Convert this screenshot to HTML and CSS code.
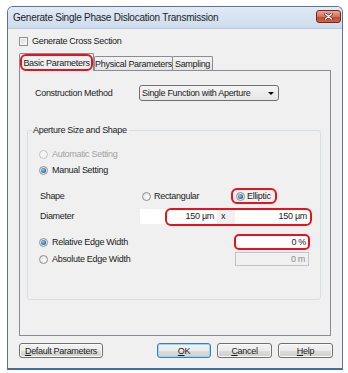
FILE: index.html
```html
<!DOCTYPE html>
<html lang="en">
<head>
  <meta charset="UTF-8" />
  <title>Generate Single Phase Dislocation Transmission</title>
  <link rel="stylesheet" href="styles.css">
</head>
<body>

  <div class="window">
    <div class="titlebar">
      <span class="title">Generate Single Phase Dislocation Transmission</span>
      <button class="close">
        <svg width="9" height="7" viewBox="0 0 9 7">
          <path d="M1.5 1 L7.5 6 M7.5 1 L1.5 6" stroke="#5a1c12" stroke-width="2.6" stroke-linecap="round"/>
          <path d="M1.5 1 L7.5 6 M7.5 1 L1.5 6" stroke="#fff" stroke-width="1.5" stroke-linecap="round"/>
        </svg>
      </button>
    </div>

    <div class="client">
      <label class="check-row">
        <span class="checkbox"></span>
        Generate Cross Section
      </label>

      <div class="tabs">
        <div class="tab active mark">Basic Parameters</div>
        <div class="tab physical">Physical Parameters</div>
        <div class="tab sampling">Sampling</div>
      </div>

      <div class="pane">
        <div class="method-row">
          <span class="method-label">Construction Method</span>
          <div class="combo">
            <span>Single Function with Aperture</span>
            <span class="arrow"></span>
          </div>
        </div>

        <fieldset class="group">
          <legend>Aperture Size and Shape</legend>
          <div class="group-body">
            <div class="row first disabled">
              <span class="radio"></span>Automatic Setting
            </div>
            <div class="row">
              <span class="radio on"></span>Manual Setting
            </div>

            <div class="row shape-row">
              <span class="field-label">Shape</span>
              <span class="option rect"><span class="radio"></span>Rectangular</span>
              <span class="option ellip mark"><span class="radio on"></span>Elliptic</span>
            </div>

            <div class="row diameter-row">
              <span class="field-label diam-label">Diameter</span>
              <div class="diameter">
                <span class="input wide">150 µm</span>
                <span class="times">x</span>
                <span class="input wide2">150 µm</span>
                <span class="diam-mark"></span>
              </div>
            </div>

            <div class="row edge-row">
              <span class="edge-label"><span class="radio on"></span>Relative Edge Width</span>
              <span class="input edge mark">0 %</span>
            </div>
            <div class="row edge-row tight">
              <span class="edge-label"><span class="radio"></span>Absolute Edge Width</span>
              <span class="input edge off">0 m</span>
            </div>
          </div>
        </fieldset>
      </div>

      <div class="buttons">
        <button class="btn default-params"><u>D</u>efault Parameters</button>
        <button class="btn ok"><u>O</u>K</button>
        <button class="btn"><u>C</u>ancel</button>
        <button class="btn"><u>H</u>elp</button>
      </div>
    </div>
  </div>

</body>
</html>
```

FILE: styles.css
```css
* {
  margin: 0;
  padding: 0;
  box-sizing: border-box;
}

body {
  background: #fff;
  font-family: "Liberation Sans", Arial, sans-serif;
  font-size: 9px;
  letter-spacing: -0.3px;
  color: #1b1b1b;
}

button {
  font: inherit;
  letter-spacing: inherit;
  color: inherit;
}

.window {
  margin: 6px 0 0 7px;
  width: 336px;
  height: 364px;
  border: 1px solid #5b7394;
  border-bottom: 2px solid #3f6ea3;
  border-radius: 6px 6px 0 0;
  background: #f0f0f0;
  display: flex;
  flex-direction: column;
  overflow: hidden;
}

/* title bar */

.titlebar {
  height: 22px;
  flex: none;
  display: flex;
  justify-content: space-between;
  align-items: center;
  padding: 0 1px 0 5px;
  background: linear-gradient(#e1eaf5, #cddced);
  border-bottom: 1px solid #b9c9dc;
}

.title {
  font-size: 10px;
  letter-spacing: -0.25px;
  color: #1e1e1e;
}

.close {
  align-self: flex-start;
  margin-top: 3px;
  width: 25px;
  height: 13px;
  border: 1px solid #6e2a1c;
  border-radius: 3px;
  background: linear-gradient(#e8a797, #d6735c 50%, #c3452c 51%, #d0644c);
  display: flex;
  align-items: center;
  justify-content: center;
}

/* client area */

.client {
  flex: 1;
  padding: 6px 11px 0;
  display: flex;
  flex-direction: column;
}

.check-row {
  height: 12px;
  display: flex;
  align-items: center;
  gap: 4px;
}

.checkbox {
  width: 9px;
  height: 9px;
  border: 1px solid #8e8f8f;
  box-shadow: inset 0 0 0 1px #f6f6f6;
  background: linear-gradient(135deg, #d6d6d6, #fafafa);
}

/* tabs */

.tabs {
  margin-top: 6px;
  height: 17px;
  display: flex;
  align-items: flex-end;
}

.tab {
  height: 14px;
  border: 1px solid #898c95;
  border-bottom: none;
  border-radius: 2px 2px 0 0;
  background: linear-gradient(#f3f3f3, #e4e4e4);
  display: flex;
  align-items: center;
  justify-content: center;
}

.tab.active {
  width: 75px;
  height: 18px;
  margin-bottom: -1px;
  background: #f0f0f0;
  z-index: 1;
}

.tab.physical {
  width: 79px;
}

.tab.sampling {
  width: 41px;
  margin-left: -1px;
}

.mark {
  position: relative;
}

.mark::after {
  content: "";
  position: absolute;
  inset: 0;
  border: 2px solid #e3141e;
  border-radius: 6px;
}

.pane {
  height: 266px;
  border: 1px solid #898c95;
  background: #f0f0f0;
}

.method-row {
  margin-top: 14px;
  padding-left: 15px;
  height: 16px;
  display: flex;
  align-items: center;
}

.method-label {
  width: 104px;
}

.combo {
  width: 140px;
  height: 16px;
  border: 1px solid #707070;
  border-radius: 3px;
  background: linear-gradient(#f5f5f5, #e5e5e5);
  padding: 0 4px 0 2px;
  display: flex;
  align-items: center;
  justify-content: space-between;
}

.arrow {
  width: 0;
  height: 0;
  border-left: 3px solid transparent;
  border-right: 3px solid transparent;
  border-top: 3px solid #000;
}

/* group box */

.group {
  margin: 23px 9px 0 7px;
  height: 176px;
  border: 1px solid #d5dfe5;
  border-radius: 3px;
}

.group legend {
  margin-left: 4px;
  padding: 0 2px 0 1px;
  line-height: 12px;
}

.group-body {
  padding-left: 11px;
}

.row {
  height: 16px;
  display: flex;
  align-items: center;
  gap: 4px;
}

.row.first {
  margin-top: 10px;
}

.row.disabled {
  color: #a3a3a3;
}

.radio {
  width: 9px;
  height: 9px;
  flex: none;
  border: 1px solid #8e8f8f;
  border-radius: 50%;
  background: radial-gradient(circle at 60% 60%, #fdfdfd, #d9d9d9);
  display: flex;
  align-items: center;
  justify-content: center;
}

.disabled .radio {
  border-color: #c2c2c2;
  background: #f4f4f4;
}

.radio.on::after {
  content: "";
  width: 5px;
  height: 5px;
  border-radius: 50%;
  background: radial-gradient(circle at 40% 40%, #9fd3f7, #2a6eb2 60%, #164c87);
}

.shape-row {
  margin-top: 10px;
  gap: 0;
}

.field-label {
  width: 103px;
  padding-left: 1px;
}

.option {
  display: flex;
  align-items: center;
  gap: 3px;
}

.option.rect {
  width: 89px;
}

.option.ellip {
  height: 16px;
  padding: 0 6px 0 5px;
  gap: 2px;
}

.diameter-row {
  margin-top: 4px;
  gap: 0;
}

.diam-label {
  width: 101px;
}

.diameter {
  position: relative;
  display: flex;
  height: 15px;
}

.input {
  height: 15px;
  background: #fff;
  padding-right: 3px;
  display: flex;
  align-items: center;
  justify-content: flex-end;
}

.input.wide {
  width: 77px;
}

.input.wide2 {
  width: 75px;
}

.times {
  width: 18px;
  padding-left: 4px;
  display: flex;
  align-items: center;
}

.diam-mark {
  position: absolute;
  top: -1px;
  bottom: -2px;
  left: 25px;
  right: -2px;
  border: 2px solid #e3141e;
  border-radius: 6px;
}

.edge-row {
  margin-top: 10px;
  gap: 0;
}

.edge-row.tight {
  margin-top: 1px;
}

.edge-label {
  width: 196px;
  display: flex;
  align-items: center;
  gap: 4px;
}

.input.edge {
  width: 74px;
  height: 14px;
}

.input.edge.mark::after {
  inset: -1px;
  border-radius: 5px;
}

.input.off {
  background: #f0f0f0;
  border: 1px solid #c3c3c3;
  color: #8d8d8d;
}

/* buttons */

.buttons {
  margin: 7px -2px 0 0;
  height: 15px;
  display: flex;
  gap: 6px;
}

.btn {
  width: 55px;
  height: 15px;
  border: 1px solid #707070;
  border-radius: 3px;
  background: linear-gradient(#f3f3f3, #ebebeb 50%, #dcdcdc 51%, #d0d0d0);
  box-shadow: inset 0 0 0 1px #fbfbfb;
}

.btn.default-params {
  width: 84px;
  margin-right: auto;
}

.btn.ok {
  width: 54px;
  border-color: #3c7fb1;
  box-shadow: inset 0 0 0 1px #9ed3f5;
}
```
